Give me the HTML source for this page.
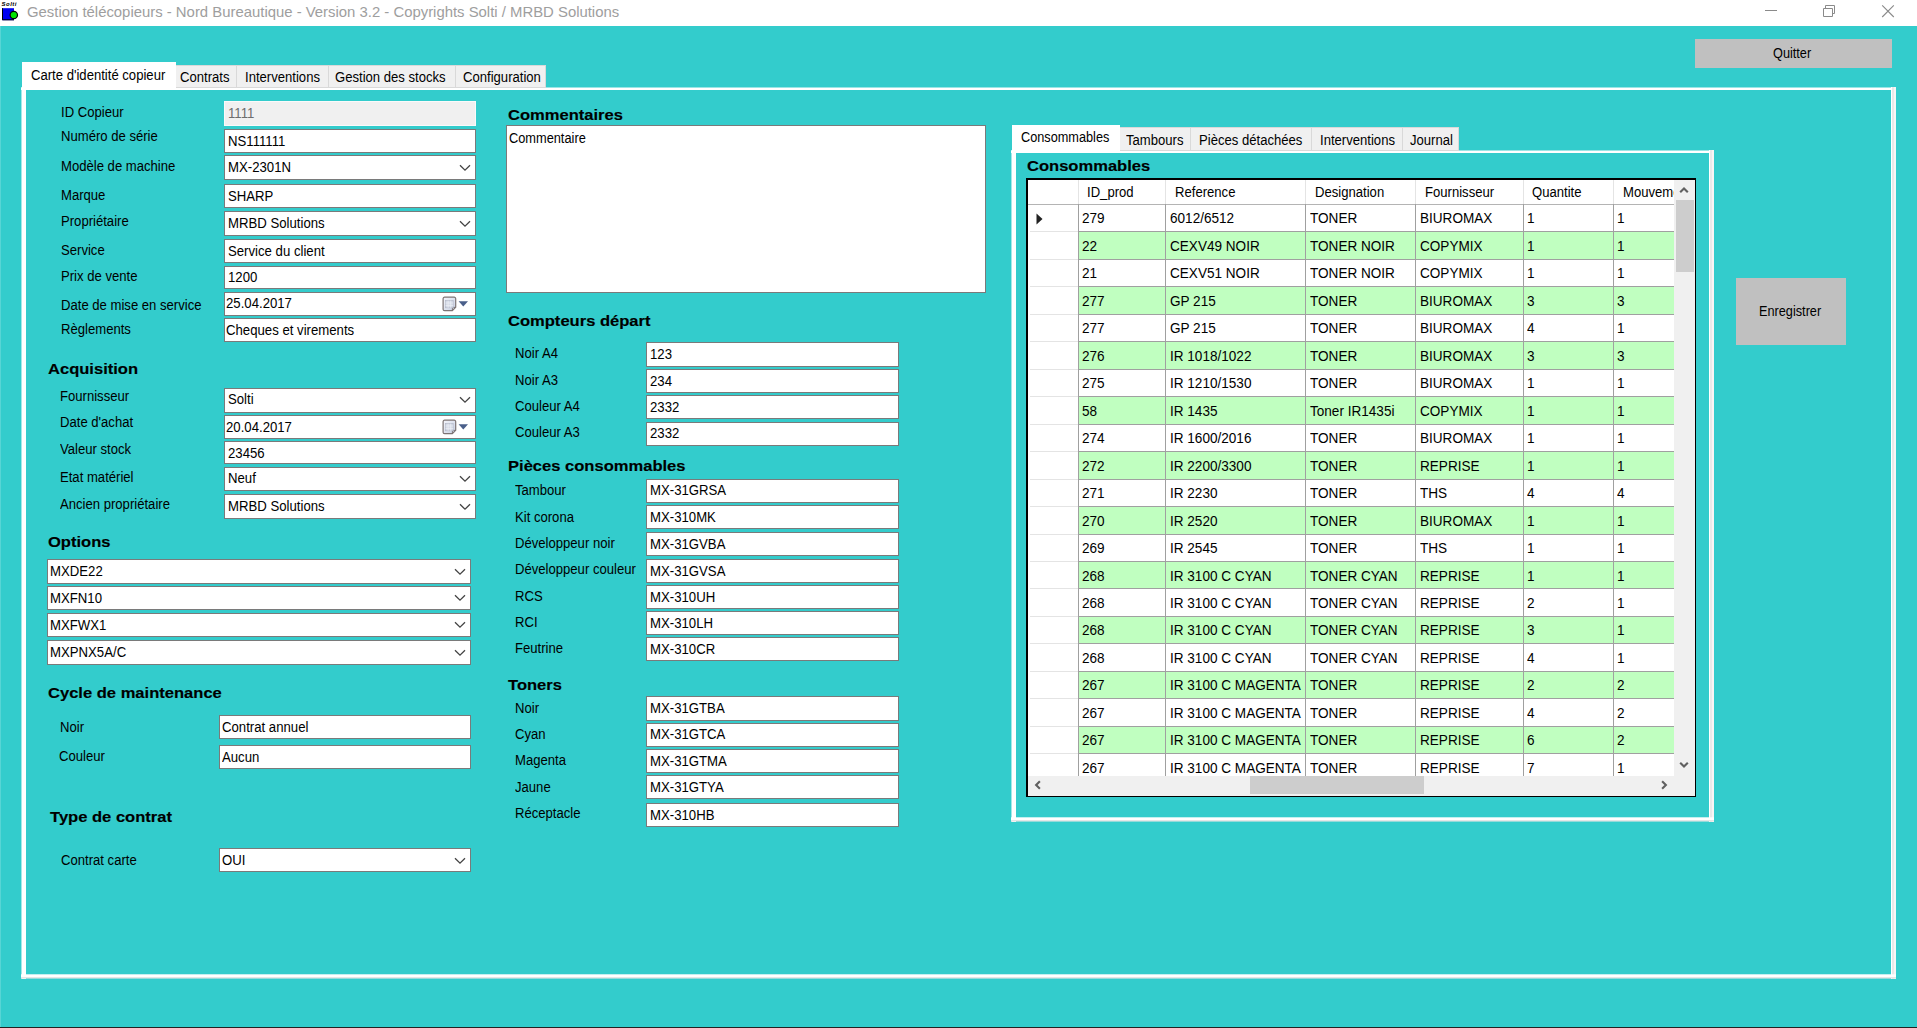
<!DOCTYPE html>
<html lang="fr"><head><meta charset="utf-8"><title>Gestion télécopieurs</title><style>
html,body{margin:0;padding:0}
body{width:1917px;height:1028px;overflow:hidden;background:#33cccc;position:relative;font-family:"Liberation Sans",sans-serif;font-size:15.5px;color:#000}
.abs,.t,.inp,.btn,.tab,.tabsel,.grid,.gclip,.gr,.hl,.vl,.sb,.thumb,#title,#appicon{position:absolute;box-sizing:border-box}
#title{left:0;top:0;width:1917px;height:26px;background:#fff}
.t{white-space:pre;line-height:17px;transform:scaleX(0.845);transform-origin:0 50%;display:inline-block}
.t.ttl{font-size:15px;line-height:20px;color:#9e9e9e;transform:scaleX(.992)}
.t.v{transform:scaleX(0.85)}
.t.c{transform:scaleX(.875)}
.t.b{transform:scaleX(.82)}
.t.h{font-weight:bold;font-size:15.4px;transform:scaleX(1.075);color:#000;-webkit-text-stroke:.15px #000}
.inp{background:#fff;border:1px solid #7a7a7a;overflow:hidden}
.inp.ro{background:#f0f0f0;border-color:#fafafa}
.inp.ro .t{color:#6d6d6d}
.chev{position:absolute;right:3.8px;top:50%;margin-top:-3.6px}
.cal{position:absolute;right:0;top:50%;margin-top:-9px}
.btn{background:#c0c0c0}
.tab{background:#f0f0f0;border:1px solid #d9d9d9;border-left:none}
.tabsel{background:#fff}
.grid{background:#fff;border:solid #000;border-width:2px 1px 1px 2px}
.gclip{overflow:hidden;background:#fff}
.gr{background:#c0ffc0}
.hl{height:1px;background:#a0a0a0}
.hl.rh{background:#e4e4e4}
.hl.hd{background:#b4b4b4}
.vl{width:1px;background:#a0a0a0}
.vl.hd{background:#e4e4e4}
.sb{background:#f0f0f0}
.thumb{background:#cdcdcd}
</style></head><body>
<div id="title"></div>
<svg id="appicon" width="20" height="22" viewBox="0 0 20 22" style="left:0px;top:0px">
<text x="1.5" y="6" font-family="Liberation Sans" font-size="6" font-weight="bold" font-style="italic" fill="#000" textLength="15">Solti</text>
<rect x="2" y="8.2" width="12" height="12" fill="#0000f0"/><path d="M2.5 8.2v11.6h11.5" stroke="#000" stroke-width="1" fill="none"/>
<circle cx="13.8" cy="15" r="4.3" fill="#000"/><circle cx="13.8" cy="15" r="3.1" fill="#00e400"/></svg>
<span class="t ttl" style="left:27px;top:1.55px;">Gestion télécopieurs - Nord Bureautique - Version 3.2 - Copyrights Solti / MRBD Solutions</span>
<svg class="abs" style="left:1760px;top:0" width="157" height="26" viewBox="0 0 157 26">
<path d="M5 10.5h12" stroke="#8a8a8a" stroke-width="1"/>
<path d="M63.5 8.5h9v8h-9z M65.5 8.5v-3h9v8h-2" fill="none" stroke="#8a8a8a" stroke-width="1"/>
<path d="M122.2 5.4l11.6 11.6M133.8 5.4l-11.6 11.6" stroke="#8a8a8a" stroke-width="1.1"/></svg>
<div class="btn" style="left:1695px;top:38.5px;width:197px;height:29.8px"></div>
<span class="t b" style="left:1773px;top:43.65px;">Quitter</span>
<div class="btn" style="left:1736.3px;top:277.6px;width:109.7px;height:67.0px"></div>
<span class="t b" style="left:1759px;top:302.05px;">Enregistrer</span>
<div class="abs" style="left:21px;top:87px;width:5px;height:892px;background:linear-gradient(90deg,rgba(255,255,255,.55) 0,rgba(255,255,255,.55) 1px,#fff 1px)"></div>
<div class="abs" style="left:21px;top:87px;width:1875px;height:3px;background:linear-gradient(180deg,rgba(255,255,255,.5) 0,rgba(255,255,255,.5) 1px,#fff 1px)"></div>
<div class="abs" style="left:1891px;top:87px;width:5px;height:892px;background:linear-gradient(90deg,#fff 0,#fff 1px,#e9e9e9 1px,#e9e9e9 3px,#f7f5f5 3px)"></div>
<div class="abs" style="left:21px;top:974px;width:1875px;height:5px;background:linear-gradient(180deg,rgba(255,255,255,.7) 0,rgba(255,255,255,.7) 1px,#fff 1px,#fff 3px,#e6e6e6 3px,#e6e6e6 4px,rgba(230,230,230,.55) 4px)"></div>
<div class="tab" style="left:176px;top:65px;width:61px;height:23px"></div>
<span class="t " style="left:180.4px;top:68.05px;">Contrats</span>
<div class="tab" style="left:237px;top:65px;width:91.60000000000002px;height:23px"></div>
<span class="t " style="left:245px;top:68.05px;">Interventions</span>
<div class="tab" style="left:328.6px;top:65px;width:127.0px;height:23px"></div>
<span class="t " style="left:335.3px;top:68.05px;">Gestion des stocks</span>
<div class="tab" style="left:455.6px;top:65px;width:90.39999999999998px;height:23px"></div>
<span class="t " style="left:463px;top:68.05px;">Configuration</span>
<div class="tabsel" style="left:21.5px;top:62px;width:154px;height:28px"></div>
<span class="t " style="left:30.5px;top:65.55px;">Carte d'identité copieur</span>
<span class="t " style="left:61px;top:103.05px;">ID Copieur</span>
<span class="t " style="left:61px;top:127.05px;">Numéro de série</span>
<span class="t " style="left:61px;top:157.05px;">Modèle de machine</span>
<span class="t " style="left:61px;top:185.55px;">Marque</span>
<span class="t " style="left:61px;top:212.05px;">Propriétaire</span>
<span class="t " style="left:61px;top:240.55px;">Service</span>
<span class="t " style="left:61px;top:267.05px;">Prix de vente</span>
<span class="t " style="left:61px;top:295.75px;">Date de mise en service</span>
<span class="t " style="left:61px;top:319.55px;">Règlements</span>
<div class="inp ro" style="left:224px;top:101.2px;width:251.8px;height:24.4px"><span class="t v" style="left:2.6px;top:1.98px">1111</span></div>
<div class="inp" style="left:224px;top:129px;width:251.8px;height:23.8px"><span class="t v" style="left:2.6px;top:1.98px">NS111111</span></div>
<div class="inp" style="left:224px;top:155.2px;width:251.8px;height:25.2px"><span class="t v" style="left:2.6px;top:1.98px">MX-2301N</span><svg class="chev" width="12" height="8" viewBox="0 0 12 8"><path d="M1 1.2 L6 6.2 L11 1.2" fill="none" stroke="#444" stroke-width="1.3"/></svg></div>
<div class="inp" style="left:224px;top:184px;width:251.8px;height:24px"><span class="t v" style="left:2.6px;top:1.98px">SHARP</span></div>
<div class="inp" style="left:224px;top:210.6px;width:251.8px;height:25.0px"><span class="t v" style="left:2.6px;top:1.98px">MRBD Solutions</span><svg class="chev" width="12" height="8" viewBox="0 0 12 8"><path d="M1 1.2 L6 6.2 L11 1.2" fill="none" stroke="#444" stroke-width="1.3"/></svg></div>
<div class="inp" style="left:224px;top:239.2px;width:251.8px;height:24.1px"><span class="t v" style="left:2.6px;top:1.98px">Service du client</span></div>
<div class="inp" style="left:224px;top:265.5px;width:251.8px;height:23.9px"><span class="t v" style="left:2.6px;top:1.98px">1200</span></div>
<div class="inp" style="left:224px;top:291.5px;width:251.8px;height:24.0px"><span class="t v" style="left:0.9px;top:1.98px">25.04.2017</span><svg class="cal" width="34" height="18" viewBox="0 0 34 18"><defs><linearGradient id="cg" x1="0" y1="0" x2="1" y2="1"><stop offset="0" stop-color="#f4f6fc"/><stop offset="1" stop-color="#c9d0e2"/></linearGradient></defs><path d="M3.6 2.2h9.6a1.5 1.5 0 0 1 1.5 1.5v8.6l-3.4 3.4h-7.7a1.5 1.5 0 0 1-1.5-1.5v-10.5a1.5 1.5 0 0 1 1.5-1.5z" fill="url(#cg)" stroke="#7d7474" stroke-width="1.2"/><path d="M14.6 12.4h-3.2v3.2" fill="none" stroke="#7d7474" stroke-width="1"/><rect x="4.6" y="5.6" width="7.6" height="7.2" fill="#d4d9e6" stroke="#b4b9c8" stroke-width=".7"/><path d="M4.6 8h7.6M4.6 10.4h7.6M7.1 5.6v7.2M9.7 5.6v7.2" stroke="#eef0f6" stroke-width=".7"/><path d="M17.6 6.2h9.4l-4.7 5.3z" fill="#4a5f8a"/></svg></div>
<div class="inp" style="left:224px;top:317.8px;width:251.8px;height:24.2px"><span class="t v" style="left:0.9px;top:1.98px">Cheques et virements</span></div>
<span class="t h" style="left:47.5px;top:360.35px;">Acquisition</span>
<span class="t " style="left:60px;top:387.05px;">Fournisseur</span>
<span class="t " style="left:60px;top:413.05px;">Date d'achat</span>
<span class="t " style="left:60px;top:439.55px;">Valeur stock</span>
<span class="t " style="left:60px;top:468.15px;">Etat matériel</span>
<span class="t " style="left:60px;top:495.05px;">Ancien propriétaire</span>
<div class="inp" style="left:224px;top:387.5px;width:251.8px;height:25.1px"><span class="t v" style="left:2.6px;top:1.98px">Solti</span><svg class="chev" width="12" height="8" viewBox="0 0 12 8"><path d="M1 1.2 L6 6.2 L11 1.2" fill="none" stroke="#444" stroke-width="1.3"/></svg></div>
<div class="inp" style="left:224px;top:415px;width:251.8px;height:24.2px"><span class="t v" style="left:0.9px;top:1.98px">20.04.2017</span><svg class="cal" width="34" height="18" viewBox="0 0 34 18"><defs><linearGradient id="cg" x1="0" y1="0" x2="1" y2="1"><stop offset="0" stop-color="#f4f6fc"/><stop offset="1" stop-color="#c9d0e2"/></linearGradient></defs><path d="M3.6 2.2h9.6a1.5 1.5 0 0 1 1.5 1.5v8.6l-3.4 3.4h-7.7a1.5 1.5 0 0 1-1.5-1.5v-10.5a1.5 1.5 0 0 1 1.5-1.5z" fill="url(#cg)" stroke="#7d7474" stroke-width="1.2"/><path d="M14.6 12.4h-3.2v3.2" fill="none" stroke="#7d7474" stroke-width="1"/><rect x="4.6" y="5.6" width="7.6" height="7.2" fill="#d4d9e6" stroke="#b4b9c8" stroke-width=".7"/><path d="M4.6 8h7.6M4.6 10.4h7.6M7.1 5.6v7.2M9.7 5.6v7.2" stroke="#eef0f6" stroke-width=".7"/><path d="M17.6 6.2h9.4l-4.7 5.3z" fill="#4a5f8a"/></svg></div>
<div class="inp" style="left:224px;top:440.7px;width:251.8px;height:23.3px"><span class="t v" style="left:2.6px;top:1.98px">23456</span></div>
<div class="inp" style="left:224px;top:466.5px;width:251.8px;height:24.7px"><span class="t v" style="left:2.6px;top:1.98px">Neuf</span><svg class="chev" width="12" height="8" viewBox="0 0 12 8"><path d="M1 1.2 L6 6.2 L11 1.2" fill="none" stroke="#444" stroke-width="1.3"/></svg></div>
<div class="inp" style="left:224px;top:493.8px;width:251.8px;height:25.2px"><span class="t v" style="left:2.6px;top:1.98px">MRBD Solutions</span><svg class="chev" width="12" height="8" viewBox="0 0 12 8"><path d="M1 1.2 L6 6.2 L11 1.2" fill="none" stroke="#444" stroke-width="1.3"/></svg></div>
<span class="t h" style="left:47.5px;top:532.85px;">Options</span>
<div class="inp" style="left:46.5px;top:559px;width:424.3px;height:24.6px"><span class="t v" style="left:2.6px;top:1.98px">MXDE22</span><svg class="chev" width="12" height="8" viewBox="0 0 12 8"><path d="M1 1.2 L6 6.2 L11 1.2" fill="none" stroke="#444" stroke-width="1.3"/></svg></div>
<div class="inp" style="left:46.5px;top:585.6px;width:424.3px;height:24.6px"><span class="t v" style="left:2.6px;top:1.98px">MXFN10</span><svg class="chev" width="12" height="8" viewBox="0 0 12 8"><path d="M1 1.2 L6 6.2 L11 1.2" fill="none" stroke="#444" stroke-width="1.3"/></svg></div>
<div class="inp" style="left:46.5px;top:612.7px;width:424.3px;height:24.8px"><span class="t v" style="left:2.6px;top:1.98px">MXFWX1</span><svg class="chev" width="12" height="8" viewBox="0 0 12 8"><path d="M1 1.2 L6 6.2 L11 1.2" fill="none" stroke="#444" stroke-width="1.3"/></svg></div>
<div class="inp" style="left:46.5px;top:640.3px;width:424.3px;height:25.0px"><span class="t v" style="left:2.6px;top:1.98px">MXPNX5A/C</span><svg class="chev" width="12" height="8" viewBox="0 0 12 8"><path d="M1 1.2 L6 6.2 L11 1.2" fill="none" stroke="#444" stroke-width="1.3"/></svg></div>
<span class="t h" style="left:47.5px;top:684.35px;">Cycle de maintenance</span>
<span class="t " style="left:60px;top:718.05px;">Noir</span>
<span class="t " style="left:59px;top:747.05px;">Couleur</span>
<div class="inp" style="left:219.3px;top:715px;width:251.5px;height:24.2px"><span class="t v" style="left:1.6px;top:1.98px">Contrat annuel</span></div>
<div class="inp" style="left:219.3px;top:745px;width:251.5px;height:24px"><span class="t v" style="left:1.6px;top:1.98px">Aucun</span></div>
<span class="t h" style="left:49.5px;top:808.35px;">Type de contrat</span>
<span class="t " style="left:60.5px;top:850.55px;">Contrat carte</span>
<div class="inp" style="left:219px;top:847.8px;width:252px;height:24.6px"><span class="t v" style="left:1.6px;top:1.98px">OUI</span><svg class="chev" width="12" height="8" viewBox="0 0 12 8"><path d="M1 1.2 L6 6.2 L11 1.2" fill="none" stroke="#444" stroke-width="1.3"/></svg></div>
<span class="t h" style="left:507.5px;top:105.85px;">Commentaires</span>
<div class="inp" style="left:506.3px;top:125px;width:479.5px;height:168px"><span class="t v" style="left:1.8px;top:2.6px;transform:scaleX(.825)">Commentaire</span></div>
<span class="t h" style="left:507.5px;top:311.85px;">Compteurs départ</span>
<span class="t " style="left:514.8px;top:344.43px;">Noir A4</span>
<div class="inp" style="left:646.4px;top:342.4px;width:252.2px;height:24.2px"><span class="t v" style="left:2.6px;top:1.98px">123</span></div>
<span class="t " style="left:514.8px;top:370.63px;">Noir A3</span>
<div class="inp" style="left:646.4px;top:369px;width:252.2px;height:23.8px"><span class="t v" style="left:2.6px;top:1.98px">234</span></div>
<span class="t " style="left:514.8px;top:396.83px;">Couleur A4</span>
<div class="inp" style="left:646.4px;top:395.4px;width:252.2px;height:23.8px"><span class="t v" style="left:2.6px;top:1.98px">2332</span></div>
<span class="t " style="left:514.8px;top:423.03px;">Couleur A3</span>
<div class="inp" style="left:646.4px;top:421.5px;width:252.2px;height:24.1px"><span class="t v" style="left:2.6px;top:1.98px">2332</span></div>
<span class="t h" style="left:507.5px;top:456.85px;">Pièces consommables</span>
<span class="t " style="left:515px;top:481.43px;">Tambour</span>
<div class="inp" style="left:646.4px;top:478.5px;width:252.2px;height:24.3px"><span class="t v" style="left:2.6px;top:1.98px">MX-31GRSA</span></div>
<span class="t " style="left:515px;top:507.7px;">Kit corona</span>
<div class="inp" style="left:646.4px;top:505.2px;width:252.2px;height:23.8px"><span class="t v" style="left:2.6px;top:1.98px">MX-310MK</span></div>
<span class="t " style="left:515px;top:533.97px;">Développeur noir</span>
<div class="inp" style="left:646.4px;top:531.6px;width:252.2px;height:24.1px"><span class="t v" style="left:2.6px;top:1.98px">MX-31GVBA</span></div>
<span class="t " style="left:515px;top:560.24px;">Développeur couleur</span>
<div class="inp" style="left:646.4px;top:558.8px;width:252.2px;height:24.1px"><span class="t v" style="left:2.6px;top:1.98px">MX-31GVSA</span></div>
<span class="t " style="left:515px;top:586.51px;">RCS</span>
<div class="inp" style="left:646.4px;top:585px;width:252.2px;height:24px"><span class="t v" style="left:2.6px;top:1.98px">MX-310UH</span></div>
<span class="t " style="left:515px;top:612.78px;">RCI</span>
<div class="inp" style="left:646.4px;top:611px;width:252.2px;height:24.3px"><span class="t v" style="left:2.6px;top:1.98px">MX-310LH</span></div>
<span class="t " style="left:515px;top:639.05px;">Feutrine</span>
<div class="inp" style="left:646.4px;top:637.2px;width:252.2px;height:24.3px"><span class="t v" style="left:2.6px;top:1.98px">MX-310CR</span></div>
<span class="t h" style="left:507.5px;top:675.85px;">Toners</span>
<span class="t " style="left:515px;top:699.03px;">Noir</span>
<div class="inp" style="left:646.4px;top:696.3px;width:252.2px;height:24.3px"><span class="t v" style="left:2.6px;top:1.98px">MX-31GTBA</span></div>
<span class="t " style="left:515px;top:725.25px;">Cyan</span>
<div class="inp" style="left:646.4px;top:722.5px;width:252.2px;height:24.0px"><span class="t v" style="left:2.6px;top:1.98px">MX-31GTCA</span></div>
<span class="t " style="left:515px;top:751.47px;">Magenta</span>
<div class="inp" style="left:646.4px;top:748.6px;width:252.2px;height:24.1px"><span class="t v" style="left:2.6px;top:1.98px">MX-31GTMA</span></div>
<span class="t " style="left:515px;top:777.69px;">Jaune</span>
<div class="inp" style="left:646.4px;top:774.8px;width:252.2px;height:24.2px"><span class="t v" style="left:2.6px;top:1.98px">MX-31GTYA</span></div>
<span class="t " style="left:515px;top:803.91px;">Réceptacle</span>
<div class="inp" style="left:646.4px;top:802.6px;width:252.2px;height:24.3px"><span class="t v" style="left:2.6px;top:1.98px">MX-310HB</span></div>
<div class="abs" style="left:1011px;top:150px;width:5px;height:672px;background:linear-gradient(90deg,rgba(255,255,255,.55) 0,rgba(255,255,255,.55) 1px,#fff 1px)"></div>
<div class="abs" style="left:1011px;top:150px;width:703px;height:3px;background:linear-gradient(180deg,rgba(255,255,255,.5) 0,rgba(255,255,255,.5) 1px,#fff 1px)"></div>
<div class="abs" style="left:1709px;top:150px;width:5px;height:672px;background:linear-gradient(90deg,#fff 0,#fff 1px,#e9e9e9 1px,#e9e9e9 3px,#f7f5f5 3px)"></div>
<div class="abs" style="left:1011px;top:817px;width:703px;height:5px;background:linear-gradient(180deg,rgba(255,255,255,.7) 0,rgba(255,255,255,.7) 1px,#fff 1px,#fff 3px,#e6e6e6 3px,#e6e6e6 4px,rgba(230,230,230,.55) 4px)"></div>
<div class="tab" style="left:1119.5px;top:127px;width:71.5px;height:23.5px"></div>
<span class="t " style="left:1125.5px;top:130.55px;">Tambours</span>
<div class="tab" style="left:1191px;top:127px;width:121px;height:23.5px"></div>
<span class="t " style="left:1198.5px;top:130.55px;">Pièces détachées</span>
<div class="tab" style="left:1312px;top:127px;width:91.29999999999995px;height:23.5px"></div>
<span class="t " style="left:1319.5px;top:130.55px;">Interventions</span>
<div class="tab" style="left:1403.3px;top:127px;width:55.299999999999955px;height:23.5px"></div>
<span class="t " style="left:1410.2px;top:130.55px;">Journal</span>
<div class="tabsel" style="left:1011.8px;top:125px;width:108px;height:28px"></div>
<span class="t b" style="left:1020.5px;top:127.55px;">Consommables</span>
<span class="t h" style="left:1026.5px;top:156.85px;">Consommables</span>
<div class="grid" style="left:1026px;top:177.5px;width:670px;height:619.5px"></div>
<div class="gclip" style="left:1028px;top:179.5px;width:646px;height:596.1px">
<div class="gr" style="left:51.00px;top:52.69px;width:596px;height:27.485px"></div>
<div class="gr" style="left:51.00px;top:107.65px;width:596px;height:27.485px"></div>
<div class="gr" style="left:51.00px;top:162.62px;width:596px;height:27.485px"></div>
<div class="gr" style="left:51.00px;top:217.59px;width:596px;height:27.485px"></div>
<div class="gr" style="left:51.00px;top:272.56px;width:596px;height:27.485px"></div>
<div class="gr" style="left:51.00px;top:327.53px;width:596px;height:27.485px"></div>
<div class="gr" style="left:51.00px;top:382.50px;width:596px;height:27.485px"></div>
<div class="gr" style="left:51.00px;top:437.47px;width:596px;height:27.485px"></div>
<div class="gr" style="left:51.00px;top:492.44px;width:596px;height:27.485px"></div>
<div class="gr" style="left:51.00px;top:547.41px;width:596px;height:27.485px"></div>
<div class="hl hd" style="left:0;top:24.20px;width:646px"></div>
<div class="hl rh" style="left:2px;top:51.69px;width:48px"></div>
<div class="hl" style="left:50.00px;top:51.69px;width:596px"></div>
<div class="hl rh" style="left:2px;top:79.17px;width:48px"></div>
<div class="hl" style="left:50.00px;top:79.17px;width:596px"></div>
<div class="hl rh" style="left:2px;top:106.65px;width:48px"></div>
<div class="hl" style="left:50.00px;top:106.65px;width:596px"></div>
<div class="hl rh" style="left:2px;top:134.14px;width:48px"></div>
<div class="hl" style="left:50.00px;top:134.14px;width:596px"></div>
<div class="hl rh" style="left:2px;top:161.62px;width:48px"></div>
<div class="hl" style="left:50.00px;top:161.62px;width:596px"></div>
<div class="hl rh" style="left:2px;top:189.11px;width:48px"></div>
<div class="hl" style="left:50.00px;top:189.11px;width:596px"></div>
<div class="hl rh" style="left:2px;top:216.59px;width:48px"></div>
<div class="hl" style="left:50.00px;top:216.59px;width:596px"></div>
<div class="hl rh" style="left:2px;top:244.08px;width:48px"></div>
<div class="hl" style="left:50.00px;top:244.08px;width:596px"></div>
<div class="hl rh" style="left:2px;top:271.56px;width:48px"></div>
<div class="hl" style="left:50.00px;top:271.56px;width:596px"></div>
<div class="hl rh" style="left:2px;top:299.05px;width:48px"></div>
<div class="hl" style="left:50.00px;top:299.05px;width:596px"></div>
<div class="hl rh" style="left:2px;top:326.53px;width:48px"></div>
<div class="hl" style="left:50.00px;top:326.53px;width:596px"></div>
<div class="hl rh" style="left:2px;top:354.02px;width:48px"></div>
<div class="hl" style="left:50.00px;top:354.02px;width:596px"></div>
<div class="hl rh" style="left:2px;top:381.50px;width:48px"></div>
<div class="hl" style="left:50.00px;top:381.50px;width:596px"></div>
<div class="hl rh" style="left:2px;top:408.99px;width:48px"></div>
<div class="hl" style="left:50.00px;top:408.99px;width:596px"></div>
<div class="hl rh" style="left:2px;top:436.47px;width:48px"></div>
<div class="hl" style="left:50.00px;top:436.47px;width:596px"></div>
<div class="hl rh" style="left:2px;top:463.96px;width:48px"></div>
<div class="hl" style="left:50.00px;top:463.96px;width:596px"></div>
<div class="hl rh" style="left:2px;top:491.44px;width:48px"></div>
<div class="hl" style="left:50.00px;top:491.44px;width:596px"></div>
<div class="hl rh" style="left:2px;top:518.93px;width:48px"></div>
<div class="hl" style="left:50.00px;top:518.93px;width:596px"></div>
<div class="hl rh" style="left:2px;top:546.41px;width:48px"></div>
<div class="hl" style="left:50.00px;top:546.41px;width:596px"></div>
<div class="hl rh" style="left:2px;top:573.90px;width:48px"></div>
<div class="hl" style="left:50.00px;top:573.90px;width:596px"></div>
<div class="hl rh" style="left:2px;top:601.38px;width:48px"></div>
<div class="hl" style="left:50.00px;top:601.38px;width:596px"></div>
<div class="vl hd" style="left:49.50px;top:0;height:24.69999999999999px"></div>
<div class="vl" style="left:49.50px;top:24.70px;height:571.4000000000001px"></div>
<div class="vl hd" style="left:137.00px;top:0;height:24.69999999999999px"></div>
<div class="vl" style="left:137.00px;top:24.70px;height:571.4000000000001px"></div>
<div class="vl hd" style="left:277.00px;top:0;height:24.69999999999999px"></div>
<div class="vl" style="left:277.00px;top:24.70px;height:571.4000000000001px"></div>
<div class="vl hd" style="left:387.30px;top:0;height:24.69999999999999px"></div>
<div class="vl" style="left:387.30px;top:24.70px;height:571.4000000000001px"></div>
<div class="vl hd" style="left:494.50px;top:0;height:24.69999999999999px"></div>
<div class="vl" style="left:494.50px;top:24.70px;height:571.4000000000001px"></div>
<div class="vl hd" style="left:584.70px;top:0;height:24.69999999999999px"></div>
<div class="vl" style="left:584.70px;top:24.70px;height:571.4000000000001px"></div>
<span class="t " style="left:59.00px;top:3.55px">ID_prod</span>
<span class="t " style="left:147.00px;top:3.55px">Reference</span>
<span class="t " style="left:287.00px;top:3.55px">Designation</span>
<span class="t " style="left:397.00px;top:3.55px">Fournisseur</span>
<span class="t " style="left:503.50px;top:3.55px">Quantite</span>
<span class="t " style="left:594.50px;top:3.55px">Mouvement</span>
<span class="t c" style="left:54.00px;top:29.70px">279</span>
<span class="t c" style="left:141.50px;top:29.70px">6012/6512</span>
<span class="t c" style="left:281.50px;top:29.70px">TONER</span>
<span class="t c" style="left:391.80px;top:29.70px">BIUROMAX</span>
<span class="t c" style="left:499.00px;top:29.70px">1</span>
<span class="t c" style="left:589.20px;top:29.70px">1</span>
<span class="t c" style="left:54.00px;top:57.19px">22</span>
<span class="t c" style="left:141.50px;top:57.19px">CEXV49 NOIR</span>
<span class="t c" style="left:281.50px;top:57.19px">TONER NOIR</span>
<span class="t c" style="left:391.80px;top:57.19px">COPYMIX</span>
<span class="t c" style="left:499.00px;top:57.19px">1</span>
<span class="t c" style="left:589.20px;top:57.19px">1</span>
<span class="t c" style="left:54.00px;top:84.67px">21</span>
<span class="t c" style="left:141.50px;top:84.67px">CEXV51 NOIR</span>
<span class="t c" style="left:281.50px;top:84.67px">TONER NOIR</span>
<span class="t c" style="left:391.80px;top:84.67px">COPYMIX</span>
<span class="t c" style="left:499.00px;top:84.67px">1</span>
<span class="t c" style="left:589.20px;top:84.67px">1</span>
<span class="t c" style="left:54.00px;top:112.15px">277</span>
<span class="t c" style="left:141.50px;top:112.15px">GP 215</span>
<span class="t c" style="left:281.50px;top:112.15px">TONER</span>
<span class="t c" style="left:391.80px;top:112.15px">BIUROMAX</span>
<span class="t c" style="left:499.00px;top:112.15px">3</span>
<span class="t c" style="left:589.20px;top:112.15px">3</span>
<span class="t c" style="left:54.00px;top:139.64px">277</span>
<span class="t c" style="left:141.50px;top:139.64px">GP 215</span>
<span class="t c" style="left:281.50px;top:139.64px">TONER</span>
<span class="t c" style="left:391.80px;top:139.64px">BIUROMAX</span>
<span class="t c" style="left:499.00px;top:139.64px">4</span>
<span class="t c" style="left:589.20px;top:139.64px">1</span>
<span class="t c" style="left:54.00px;top:167.12px">276</span>
<span class="t c" style="left:141.50px;top:167.12px">IR 1018/1022</span>
<span class="t c" style="left:281.50px;top:167.12px">TONER</span>
<span class="t c" style="left:391.80px;top:167.12px">BIUROMAX</span>
<span class="t c" style="left:499.00px;top:167.12px">3</span>
<span class="t c" style="left:589.20px;top:167.12px">3</span>
<span class="t c" style="left:54.00px;top:194.61px">275</span>
<span class="t c" style="left:141.50px;top:194.61px">IR 1210/1530</span>
<span class="t c" style="left:281.50px;top:194.61px">TONER</span>
<span class="t c" style="left:391.80px;top:194.61px">BIUROMAX</span>
<span class="t c" style="left:499.00px;top:194.61px">1</span>
<span class="t c" style="left:589.20px;top:194.61px">1</span>
<span class="t c" style="left:54.00px;top:222.09px">58</span>
<span class="t c" style="left:141.50px;top:222.09px">IR 1435</span>
<span class="t c" style="left:281.50px;top:222.09px">Toner IR1435i</span>
<span class="t c" style="left:391.80px;top:222.09px">COPYMIX</span>
<span class="t c" style="left:499.00px;top:222.09px">1</span>
<span class="t c" style="left:589.20px;top:222.09px">1</span>
<span class="t c" style="left:54.00px;top:249.58px">274</span>
<span class="t c" style="left:141.50px;top:249.58px">IR 1600/2016</span>
<span class="t c" style="left:281.50px;top:249.58px">TONER</span>
<span class="t c" style="left:391.80px;top:249.58px">BIUROMAX</span>
<span class="t c" style="left:499.00px;top:249.58px">1</span>
<span class="t c" style="left:589.20px;top:249.58px">1</span>
<span class="t c" style="left:54.00px;top:277.06px">272</span>
<span class="t c" style="left:141.50px;top:277.06px">IR 2200/3300</span>
<span class="t c" style="left:281.50px;top:277.06px">TONER</span>
<span class="t c" style="left:391.80px;top:277.06px">REPRISE</span>
<span class="t c" style="left:499.00px;top:277.06px">1</span>
<span class="t c" style="left:589.20px;top:277.06px">1</span>
<span class="t c" style="left:54.00px;top:304.55px">271</span>
<span class="t c" style="left:141.50px;top:304.55px">IR 2230</span>
<span class="t c" style="left:281.50px;top:304.55px">TONER</span>
<span class="t c" style="left:391.80px;top:304.55px">THS</span>
<span class="t c" style="left:499.00px;top:304.55px">4</span>
<span class="t c" style="left:589.20px;top:304.55px">4</span>
<span class="t c" style="left:54.00px;top:332.03px">270</span>
<span class="t c" style="left:141.50px;top:332.03px">IR 2520</span>
<span class="t c" style="left:281.50px;top:332.03px">TONER</span>
<span class="t c" style="left:391.80px;top:332.03px">BIUROMAX</span>
<span class="t c" style="left:499.00px;top:332.03px">1</span>
<span class="t c" style="left:589.20px;top:332.03px">1</span>
<span class="t c" style="left:54.00px;top:359.52px">269</span>
<span class="t c" style="left:141.50px;top:359.52px">IR 2545</span>
<span class="t c" style="left:281.50px;top:359.52px">TONER</span>
<span class="t c" style="left:391.80px;top:359.52px">THS</span>
<span class="t c" style="left:499.00px;top:359.52px">1</span>
<span class="t c" style="left:589.20px;top:359.52px">1</span>
<span class="t c" style="left:54.00px;top:387.00px">268</span>
<span class="t c" style="left:141.50px;top:387.00px">IR 3100 C CYAN</span>
<span class="t c" style="left:281.50px;top:387.00px">TONER CYAN</span>
<span class="t c" style="left:391.80px;top:387.00px">REPRISE</span>
<span class="t c" style="left:499.00px;top:387.00px">1</span>
<span class="t c" style="left:589.20px;top:387.00px">1</span>
<span class="t c" style="left:54.00px;top:414.49px">268</span>
<span class="t c" style="left:141.50px;top:414.49px">IR 3100 C CYAN</span>
<span class="t c" style="left:281.50px;top:414.49px">TONER CYAN</span>
<span class="t c" style="left:391.80px;top:414.49px">REPRISE</span>
<span class="t c" style="left:499.00px;top:414.49px">2</span>
<span class="t c" style="left:589.20px;top:414.49px">1</span>
<span class="t c" style="left:54.00px;top:441.97px">268</span>
<span class="t c" style="left:141.50px;top:441.97px">IR 3100 C CYAN</span>
<span class="t c" style="left:281.50px;top:441.97px">TONER CYAN</span>
<span class="t c" style="left:391.80px;top:441.97px">REPRISE</span>
<span class="t c" style="left:499.00px;top:441.97px">3</span>
<span class="t c" style="left:589.20px;top:441.97px">1</span>
<span class="t c" style="left:54.00px;top:469.46px">268</span>
<span class="t c" style="left:141.50px;top:469.46px">IR 3100 C CYAN</span>
<span class="t c" style="left:281.50px;top:469.46px">TONER CYAN</span>
<span class="t c" style="left:391.80px;top:469.46px">REPRISE</span>
<span class="t c" style="left:499.00px;top:469.46px">4</span>
<span class="t c" style="left:589.20px;top:469.46px">1</span>
<span class="t c" style="left:54.00px;top:496.94px">267</span>
<span class="t c" style="left:141.50px;top:496.94px">IR 3100 C MAGENTA</span>
<span class="t c" style="left:281.50px;top:496.94px">TONER</span>
<span class="t c" style="left:391.80px;top:496.94px">REPRISE</span>
<span class="t c" style="left:499.00px;top:496.94px">2</span>
<span class="t c" style="left:589.20px;top:496.94px">2</span>
<span class="t c" style="left:54.00px;top:524.43px">267</span>
<span class="t c" style="left:141.50px;top:524.43px">IR 3100 C MAGENTA</span>
<span class="t c" style="left:281.50px;top:524.43px">TONER</span>
<span class="t c" style="left:391.80px;top:524.43px">REPRISE</span>
<span class="t c" style="left:499.00px;top:524.43px">4</span>
<span class="t c" style="left:589.20px;top:524.43px">2</span>
<span class="t c" style="left:54.00px;top:551.91px">267</span>
<span class="t c" style="left:141.50px;top:551.91px">IR 3100 C MAGENTA</span>
<span class="t c" style="left:281.50px;top:551.91px">TONER</span>
<span class="t c" style="left:391.80px;top:551.91px">REPRISE</span>
<span class="t c" style="left:499.00px;top:551.91px">6</span>
<span class="t c" style="left:589.20px;top:551.91px">2</span>
<span class="t c" style="left:54.00px;top:579.40px">267</span>
<span class="t c" style="left:141.50px;top:579.40px">IR 3100 C MAGENTA</span>
<span class="t c" style="left:281.50px;top:579.40px">TONER</span>
<span class="t c" style="left:391.80px;top:579.40px">REPRISE</span>
<span class="t c" style="left:499.00px;top:579.40px">7</span>
<span class="t c" style="left:589.20px;top:579.40px">1</span>
<svg class="abs" style="left:8px;top:33.0px" width="8" height="12" viewBox="0 0 8 12"><path d="M0.5 0.5v11l6-5.5z" fill="#222"/></svg>
</div>
<div class="sb" style="left:1674px;top:179.5px;width:21px;height:616.5px"></div>
<div class="sb" style="left:1028px;top:775.6px;width:667px;height:20.399999999999977px"></div>
<div class="thumb" style="left:1675.5px;top:199.8px;width:18px;height:72px"></div>
<div class="thumb" style="left:1250px;top:776.3px;width:173.5px;height:18px"></div>
<svg class="abs" style="left:1676.4px;top:181.8px" width="16" height="16" viewBox="-8 -8 16 16"><path d="M-3.8 2.3L0 -1.6L3.8 2.3" fill="none" stroke="#606060" stroke-width="2.1"/></svg>
<svg class="abs" style="left:1676.4px;top:756.9px" width="16" height="16" viewBox="-8 -8 16 16"><path d="M-3.8 -2.3L0 1.6L3.8 -2.3" fill="none" stroke="#606060" stroke-width="2.1"/></svg>
<svg class="abs" style="left:1029.6px;top:777.3px" width="16" height="16" viewBox="-8 -8 16 16"><path d="M1.9 -3.8L-1.9 0L1.9 3.8" fill="none" stroke="#606060" stroke-width="2.1"/></svg>
<svg class="abs" style="left:1655.7px;top:777.3px" width="16" height="16" viewBox="-8 -8 16 16"><path d="M-1.9 -3.8L1.9 0L-1.9 3.8" fill="none" stroke="#606060" stroke-width="2.1"/></svg>
<div class="abs" style="left:0;top:26px;width:1px;height:1001px;background:rgba(255,255,255,.18)"></div>
<div class="abs" style="left:0;top:1026.5px;width:1917px;height:1.5px;background:#222"></div>
</body></html>
